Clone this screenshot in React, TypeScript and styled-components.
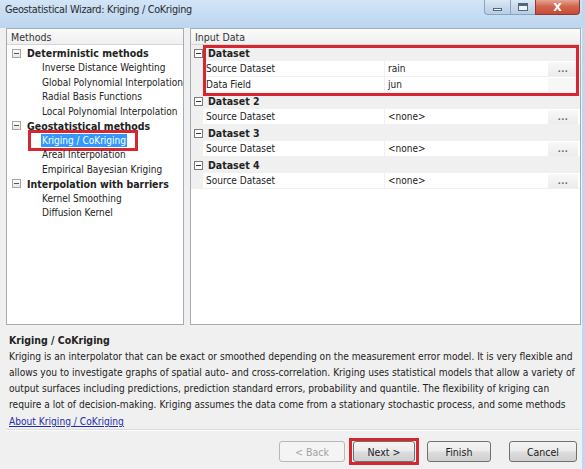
import React from 'react';
import styled, { createGlobalStyle } from 'styled-components';

const GlobalStyle = createGlobalStyle`
  html, body {
    margin: 0;
    padding: 0;
    background: #f0f0f0;
  }
  * {
    box-sizing: border-box;
  }
`;

const UI_FONT = `'DejaVu Sans Condensed', 'DejaVu Sans', Tahoma, sans-serif`;

interface TreeGroup {
  title: string;
  items: string[];
}

const METHODS: TreeGroup[] = [
  {
    title: 'Deterministic methods',
    items: [
      'Inverse Distance Weighting',
      'Global Polynomial Interpolation',
      'Radial Basis Functions',
      'Local Polynomial Interpolation',
    ],
  },
  {
    title: 'Geostatistical methods',
    items: ['Kriging / CoKriging', 'Areal Interpolation', 'Empirical Bayesian Kriging'],
  },
  {
    title: 'Interpolation with barriers',
    items: ['Kernel Smoothing', 'Diffusion Kernel'],
  },
];

interface PropCategory {
  name: string;
  props: { label: string; value: string; button: boolean }[];
}

const DATASETS: PropCategory[] = [
  {
    name: 'Dataset',
    props: [
      { label: 'Source Dataset', value: 'rain', button: true },
      { label: 'Data Field', value: 'jun', button: false },
    ],
  },
  { name: 'Dataset 2', props: [{ label: 'Source Dataset', value: '<none>', button: true }] },
  { name: 'Dataset 3', props: [{ label: 'Source Dataset', value: '<none>', button: true }] },
  { name: 'Dataset 4', props: [{ label: 'Source Dataset', value: '<none>', button: true }] },
];

const SELECTED = 'Kriging / CoKriging';

// the description is shown with the wizard's own line breaks
const DESCRIPTION = [
  'Kriging is an interpolator that can be exact or smoothed depending on the measurement error model. It is very flexible and',
  'allows you to investigate graphs of spatial auto- and cross-correlation. Kriging uses statistical models that allow a variety of',
  'output surfaces including predictions, prediction standard errors, probability and quantile. The flexibility of kriging can',
  'require a lot of decision-making. Kriging assumes the data come from a stationary stochastic process, and some methods',
];

const Window = styled.div`
  position: relative;
  width: 585px;
  height: 469px;
  background: #f0f0f0;
  border-right: 3px solid #c3d7ec;
  overflow: hidden;
  display: flex;
  flex-direction: column;
`;

const TitleBar = styled.div`
  height: 28px;
  flex: none;
  display: flex;
  align-items: flex-start;
  justify-content: space-between;
  background: linear-gradient(180deg, #d3e5f7 0%, #c4dbf2 60%, #bcd5ee 100%);
`;

const Title = styled.div`
  font-family: ${UI_FONT};
  font-size: 10.8px;
  color: #2a2a2a;
  padding: 3px 0 0 5px;
  letter-spacing: -0.3px;
`;

const Controls = styled.div`
  display: flex;
  margin-right: 2px;
`;

const CtrlButton = styled.div<{ $close?: boolean; $w: number }>`
  width: ${(p) => p.$w}px;
  height: 15px;
  border: 1px solid ${(p) => (p.$close ? '#8d3a34' : '#8aa3bf')};
  border-top: none;
  margin-left: -1px;
  border-radius: 0 0 ${(p) => (p.$close ? '4px 0' : '0 0')};
  background: ${(p) =>
    p.$close
      ? 'linear-gradient(180deg, #e4a596 0%, #d2664f 45%, #c44c33 100%)'
      : 'linear-gradient(180deg, #dde9f5 0%, #c8d9ec 50%, #b9cde3 100%)'};
  display: flex;
  align-items: center;
  justify-content: center;
  color: #fff;
  font-family: 'DejaVu Sans', sans-serif;
  font-weight: bold;
  font-size: 11px;
  &:first-child {
    border-radius: 0 0 0 4px;
  }
`;

const MinGlyph = styled.div`
  width: 9px;
  height: 3px;
  margin-top: 5px;
  background: #f4f8fc;
  border: 1px solid #51667f;
`;

const MaxGlyph = styled.div`
  width: 10px;
  height: 8px;
  border: 1px solid #51667f;
  border-top-width: 3px;
  background: #eef4fa;
`;

const Body = styled.div`
  flex: 1;
  display: flex;
  flex-direction: column;
  padding: 0 1px 0 6px;
`;

const Panes = styled.div`
  height: 297px;
  flex: none;
  display: flex;
  gap: 6px;
`;

const Pane = styled.div<{ $width?: number }>`
  ${(p) => (p.$width ? `width: ${p.$width}px; flex: none;` : 'flex: 1;')}
  border: 1px solid #a7acb3;
  background: #fff;
  display: flex;
  flex-direction: column;
`;

const PaneHeader = styled.div`
  height: 16px;
  flex: none;
  background: linear-gradient(180deg, #fbfbfb 0%, #efefef 100%);
  border-bottom: 1px solid #d5d5d5;
  font-family: ${UI_FONT};
  font-size: 10.5px;
  color: #333;
  padding: 1px 0 0 4px;
  line-height: 14px;
`;

const Tree = styled.div`
  padding: 1px 0 0 5px;
  font-family: ${UI_FONT};
  font-size: 10px;
  color: #222;
`;

const GroupRow = styled.div`
  height: 14.5px;
  display: flex;
  align-items: center;
  font-weight: bold;
  font-size: 10.5px;
  white-space: nowrap;
`;

const Expander = styled.span`
  width: 9px;
  height: 9px;
  border: 1px solid #a6a6a6;
  background: linear-gradient(180deg, #fff 0%, #e6e6e6 100%);
  margin-right: 6px;
  display: inline-flex;
  align-items: center;
  justify-content: center;
  flex: none;
  &::after {
    content: '';
    width: 5px;
    height: 1px;
    background: #555;
  }
`;

const ItemRow = styled.div`
  height: 14.5px;
  display: flex;
  align-items: center;
  padding-left: 29px;
  white-space: nowrap;
`;

const ItemLabel = styled.span<{ $selected?: boolean }>`
  position: relative;
  padding: 0 1px;
  line-height: 13px;
  background: ${(p) => (p.$selected ? '#3399ff' : 'transparent')};
  color: ${(p) => (p.$selected ? '#fff' : '#222')};
`;

const RedBox = styled.div<{ $inset: string }>`
  position: absolute;
  inset: ${(p) => p.$inset};
  border: 3px solid #d62731;
  pointer-events: none;
`;

const Grid = styled.div`
  position: relative;
  font-family: ${UI_FONT};
  font-size: 10px;
  color: #222;
`;

const CategoryRow = styled.div`
  height: 16px;
  display: flex;
  align-items: center;
  background: #f0f0f0;
  font-weight: bold;
  font-size: 10.5px;
`;

const GridExpander = styled.span`
  width: 9px;
  height: 9px;
  border: 1px solid #7a7a7a;
  background: #fff;
  margin: 0 5px 0 3px;
  display: inline-flex;
  align-items: center;
  justify-content: center;
  flex: none;
  &::after {
    content: '';
    width: 5px;
    height: 1px;
    background: #333;
  }
`;

const PropRow = styled.div`
  height: 16px;
  display: flex;
  align-items: stretch;
  background: #f0f0f0;
`;

const PropCells = styled.div`
  flex: 1;
  margin-left: 12px;
  display: flex;
  background: #fff;
  border-bottom: 1px solid #f0f0f0;
`;

const PropName = styled.div`
  width: 182px;
  flex: none;
  padding-left: 3px;
  display: flex;
  align-items: center;
  border-right: 1px solid #f0f0f0;
`;

const PropValue = styled.div`
  flex: 1;
  padding-left: 3px;
  display: flex;
  align-items: center;
`;

const DotButton = styled.div<{ $visible: boolean }>`
  width: 30px;
  flex: none;
  margin: 1px 2px 0 0;
  background: ${(p) => (p.$visible ? 'linear-gradient(180deg, #f8f8f8, #ececec)' : '#f7f7f7')};
  color: #666;
  font-size: 9px;
  font-weight: bold;
  display: flex;
  align-items: center;
  justify-content: center;
  letter-spacing: 0.5px;
`;

const Description = styled.div`
  height: 105px;
  flex: none;
  position: relative;
  padding: 4px 4px 0 3px;
  font-family: ${UI_FONT};
  font-size: 10.15px;
  color: #222;
  border-bottom: 1px solid #dcdcdc;
`;

const DescTitle = styled.div`
  font-weight: bold;
  font-size: 10.5px;
  line-height: 16px;
  margin-top: 3px;
`;

const DescText = styled.div`
  margin-top: 1px;
`;

const DescLine = styled.div`
  line-height: 16px;
  white-space: nowrap;
`;

const AboutLink = styled.a`
  display: inline-block;
  margin-top: 2px;
  color: #1c2fa8;
  text-decoration: underline;
  line-height: 14px;
`;

const Footer = styled.div`
  flex: 1;
  display: flex;
  justify-content: flex-end;
  align-items: flex-start;
  padding: 10px 4px 0 0;
  gap: 8px;
  border-top: 1px solid #fff;
`;

const Button = styled.div<{ $disabled?: boolean; $w: number; $ml?: number }>`
  position: relative;
  width: ${(p) => p.$w}px;
  margin-left: ${(p) => p.$ml ?? 0}px;
  height: 21px;
  border: 1px solid ${(p) => (p.$disabled ? '#b5b9bc' : '#707070')};
  border-radius: 3px;
  background: ${(p) =>
    p.$disabled
      ? '#f4f4f4'
      : 'linear-gradient(180deg, #f4f4f4 0%, #ebebeb 48%, #dddddd 52%, #cfcfcf 100%)'};
  color: ${(p) => (p.$disabled ? '#a3a3a3' : '#1a1a1a')};
  font-family: ${UI_FONT};
  font-size: 10.5px;
  display: flex;
  align-items: center;
  justify-content: center;
`;

const BUTTONS = [
  { label: '< Back', w: 66, disabled: true },
  { label: 'Next >', w: 62, highlight: true },
  { label: 'Finish', w: 64, ml: 4 },
  { label: 'Cancel', w: 68, ml: 10 },
];

export default function App() {
  return (
    <>
      <GlobalStyle />
      <Window>
        <TitleBar>
          <Title>Geostatistical Wizard: Kriging / CoKriging</Title>
          <Controls>
            <CtrlButton $w={27}>
              <MinGlyph />
            </CtrlButton>
            <CtrlButton $w={26}>
              <MaxGlyph />
            </CtrlButton>
            <CtrlButton $w={45} $close>
              X
            </CtrlButton>
          </Controls>
        </TitleBar>
        <Body>
          <Panes>
            <Pane $width={178}>
              <PaneHeader>Methods</PaneHeader>
              <Tree>
                {METHODS.map((g) => (
                  <React.Fragment key={g.title}>
                    <GroupRow>
                      <Expander />
                      {g.title}
                    </GroupRow>
                    {g.items.map((it) => (
                      <ItemRow key={it}>
                        <ItemLabel $selected={it === SELECTED}>
                          {it}
                          {it === SELECTED && <RedBox $inset="-4px -11px -4px -13px" />}
                        </ItemLabel>
                      </ItemRow>
                    ))}
                  </React.Fragment>
                ))}
              </Tree>
            </Pane>
            <Pane>
              <PaneHeader>Input Data</PaneHeader>
              <Grid>
                {DATASETS.map((c) => (
                  <React.Fragment key={c.name}>
                    <CategoryRow>
                      <GridExpander />
                      {c.name}
                    </CategoryRow>
                    {c.props.map((p) => (
                      <PropRow key={c.name + p.label}>
                        <PropCells>
                          <PropName>{p.label}</PropName>
                          <PropValue>{p.value}</PropValue>
                          <DotButton $visible={p.button}>{p.button ? '...' : ''}</DotButton>
                        </PropCells>
                      </PropRow>
                    ))}
                  </React.Fragment>
                ))}
                <RedBox $inset="0 1px auto 12px" style={{ height: 51 }} />
              </Grid>
            </Pane>
          </Panes>
          <Description>
            <DescTitle>Kriging / CoKriging</DescTitle>
            <DescText>
              {DESCRIPTION.map((line) => (
                <DescLine key={line}>{line}</DescLine>
              ))}
            </DescText>
            <AboutLink href="#">About Kriging / CoKriging</AboutLink>
          </Description>
          <Footer>
            {BUTTONS.map((b) => (
              <Button key={b.label} $w={b.w} $ml={b.ml} $disabled={b.disabled}>
                {b.label}
                {b.highlight && <RedBox $inset="-4px -5px -4px -5px" />}
              </Button>
            ))}
          </Footer>
        </Body>
      </Window>
    </>
  );
}
